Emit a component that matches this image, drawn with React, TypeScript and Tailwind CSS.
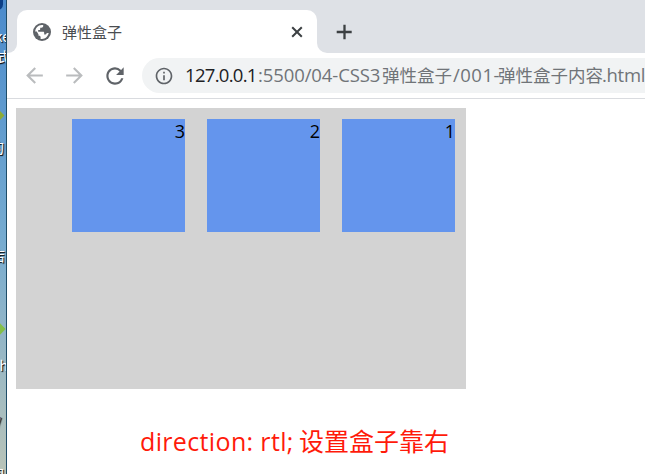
import type { ReactNode } from 'react';
import { MdArrowBack, MdArrowForward, MdRefresh, MdInfoOutline } from 'react-icons/md';

const latin = "font-['Open_Sans','Noto_Sans_CJK_SC',sans-serif]";

function Box({ children }: { children: ReactNode }) {
  return (
    <div dir="rtl" className="h-[113px] w-[113px] bg-[#6495ed] text-[18px] leading-6 text-black">
      {children}
    </div>
  );
}

function GlobeIcon() {
  return (
    <svg className="size-[18px]" viewBox="0 0 18 18">
      <circle cx="9" cy="9" r="9" fill="#5f6368" />
      <path
        d="M2.200 8.500C2.400 5.200 5 2.300 8.800 2.100h1.400v.9c0 1-.8 1.700-1.800 1.700H7.200v1.500c0 .6-.4.9-1 .9H5.200V8.800h5c.7 0 1 .5 1 1v1.700h1.200c.7 0 1.200-.6 1.200-1.200v-.4h2.100C15.100 13.200 12.400 15.700 9 15.900H7.600v-1.700c0-.8-.6-1.400-1.400-1.400H5.500v-1.300L3.800 8.500Z"
        fill="#fff"
      />
    </svg>
  );
}

function Desktop() {
  return (
    <div className="relative h-full w-[7px] shrink-0 overflow-hidden border-r border-[#1f4d68] bg-linear-to-b from-[#4b8bcc] via-[#76abd0] to-[#b9c4b8] font-['Noto_Sans_CJK_SC',sans-serif] text-[14px] leading-4 text-white [text-shadow:1px_1px_1px_#000]">
      <div className="absolute -left-2 -top-2 h-[18px] w-[11px] rounded-full bg-[#0c3f86]" />
      <span className="absolute right-[-4px] top-[28px]">ke</span>
      <span className="absolute right-[-4px] top-[48px]">式</span>
      <div className="absolute -left-1 top-[112px] size-[7px] rotate-45 bg-[#8dac35]" />
      <span className="absolute right-[2px] top-[139px]">的</span>
      <span className="absolute right-[1px] top-[247px]">店</span>
      <div className="absolute -left-1 top-[325px] size-[8px] rotate-45 bg-[#84bf48]" />
      <span className="absolute right-[-2px] top-[357px]">h</span>
      <span className="absolute left-[-6px] top-[411px] text-[#695963]">y</span>
      <span className="absolute right-[2px] top-[466px]">回</span>
    </div>
  );
}

function TabStrip() {
  return (
    <div className="flex h-[53px] bg-[#dee1e6] pt-[10px]">
      <div className="flex w-[10px] items-end bg-white">
        <div className="h-[43px] w-[10px] rounded-br-[9px] bg-[#dee1e6]" />
      </div>
      <div className="flex h-[43px] w-[300px] items-center rounded-t-[10px] bg-white pl-[16px] pr-[14px]">
        <GlobeIcon />
        <span className="ml-[11px] font-['Noto_Sans_CJK_SC',sans-serif] text-[15px] leading-5 text-[#4a4d51]">弹性盒子</span>
        <svg className="ml-auto size-3" viewBox="0 0 12 12" fill="none" stroke="#3c4043" strokeWidth="2">
          <path d="m1.200 1.200 9.600 9.600m0-9.600-9.600 9.600" />
        </svg>
      </div>
      <div className="flex flex-1 bg-white">
        <div className="flex h-[43px] flex-1 items-center rounded-bl-[10px] bg-[#dee1e6] pl-[19px]">
          <svg className="size-4" viewBox="0 0 16 16" fill="none" stroke="#3c4043" strokeWidth="2.3">
            <path d="M8.500 .7v14.600M.7 8h15" />
          </svg>
        </div>
      </div>
    </div>
  );
}

function Toolbar() {
  return (
    <div className="flex h-[46px] items-center border-b border-[#d9dbdf] bg-white pl-[15px]">
      <MdArrowBack className="size-[25px] shrink-0 text-[#babcbe]" />
      <MdArrowForward className="ml-[15px] size-[25px] shrink-0 text-[#babcbe]" />
      <MdRefresh className="ml-[15px] size-[26px] shrink-0 text-[#5f6368]" />
      <div className="ml-[14px] flex h-[35px] flex-1 items-center overflow-hidden rounded-l-full bg-[#f1f3f4] pl-[12px]">
        <MdInfoOutline className="size-[20px] shrink-0 text-[#5f6368]" />
        <div className={`${latin} relative -top-px ml-[11px] flex whitespace-nowrap text-[18.5px] leading-6 text-[#707478]`}>
          <span className="w-[73px] shrink-0 tracking-[-0.7px] text-[#202124]">127.0.0.1</span>
          <span className="w-[124px] shrink-0 tracking-[-0.1px]">:5500/04-CSS3</span>
          <span className="w-[71px] shrink-0 text-[17.5px]">弹性盒子</span>
          <span className="w-[45px] shrink-0 tracking-[0.5px]">/001-</span>
          <span className="w-[104px] shrink-0 text-[17.5px]">弹性盒子内容</span>
          <span className="tracking-[-0.3px]">.html</span>
        </div>
      </div>
    </div>
  );
}

export default function App() {
  return (
    <div className="flex h-[474px] w-[645px] overflow-hidden bg-white">
      <Desktop />
      <div className="flex min-w-0 flex-1 flex-col">
        <TabStrip />
        <Toolbar />
        <main className={`${latin} pl-[9px] pt-[9px]`}>
          <div dir="rtl" className="flex h-[281px] w-[450px] items-start gap-[22px] bg-[#d3d3d3] px-[11px] pt-[11px]">
            <Box>1</Box>
            <Box>2</Box>
            <Box>3</Box>
          </div>
          <p className="ml-[124px] mt-[34px] flex whitespace-nowrap text-[25px] leading-9 text-[#ff1a0a]">
            <span className="w-[159px] shrink-0 tracking-[0.35px]">direction: rtl;</span>
            <span>设置盒子靠右</span>
          </p>
        </main>
      </div>
    </div>
  );
}
